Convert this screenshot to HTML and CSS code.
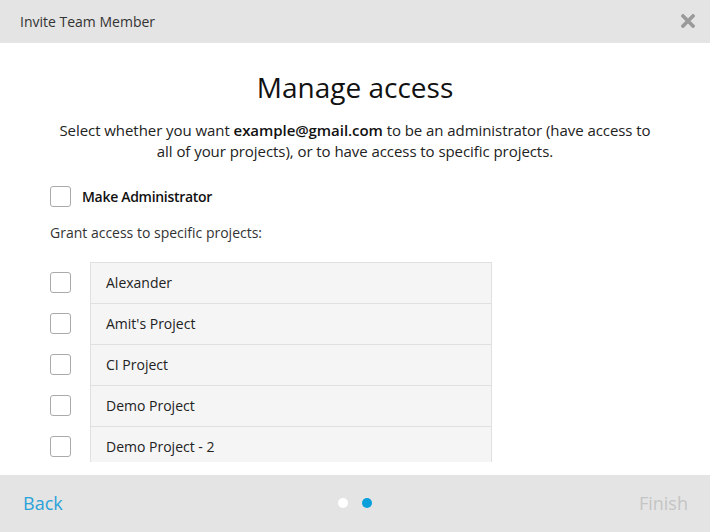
FILE: index.html
```html
<!DOCTYPE html>
<html>
<head>
<meta charset="utf-8">
<link rel="stylesheet" href="styles.css">
</head>
<body>
<div class="modal">
  <div class="header">
    <span class="header-title">Invite Team Member</span>
    <svg class="close" width="14" height="14" viewBox="0 0 14 14"><path d="M2 2 L12 12 M12 2 L2 12" stroke="#9a9a9a" stroke-width="3.6" stroke-linecap="square"/></svg>
  </div>
  <div class="content">
    <h1 class="title">Manage access</h1>
    <p class="desc">Select whether you want <b>example@gmail.com</b> to be an administrator (have access to all of your projects), or to have access to specific projects.</p>
    <div class="admin-row">
      <span class="cb"></span>
      <span class="admin-label">Make Administrator</span>
    </div>
    <div class="grant">Grant access to specific projects:</div>
    <div class="list-wrap">
      <div class="row"><span class="cb"></span><div class="item">Alexander</div></div>
      <div class="row"><span class="cb"></span><div class="item">Amit's Project</div></div>
      <div class="row"><span class="cb"></span><div class="item">CI Project</div></div>
      <div class="row"><span class="cb"></span><div class="item">Demo Project</div></div>
      <div class="row"><span class="cb"></span><div class="item">Demo Project - 2</div></div>
    </div>
  </div>
  <div class="footer">
    <span class="back">Back</span>
    <div class="dots"><span class="dot"></span><span class="dot active"></span></div>
    <span class="finish">Finish</span>
  </div>
</div>
</body>
</html>
```
FILE: styles.css
```css
html, body {
  margin: 0;
  padding: 0;
  background: #fff;
}
body {
  font-family: "Open Sans", "Liberation Sans", sans-serif;
  color: #222;
}
.modal {
  width: 710px;
  height: 532px;
  display: flex;
  flex-direction: column;
  overflow: hidden;
}
.header {
  height: 43px;
  flex: none;
  background: #e4e4e4;
  display: flex;
  align-items: center;
  justify-content: space-between;
  padding: 0 15px 0 20px;
  box-sizing: border-box;
}
.header-title {
  font-size: 14px;
  color: #333;
}
.close {
  display: block;
  margin-top: -1px;
}
.content {
  flex: 1;
  min-height: 0;
  display: flex;
  flex-direction: column;
  padding: 0 50px 13px;
  overflow: hidden;
}
.title {
  margin: 25px 0 0;
  font-size: 28px;
  font-weight: normal;
  line-height: 38px;
  text-align: center;
  color: #111;
}
.desc {
  margin: 14px 0 0;
  font-size: 15px;
  line-height: 21px;
  letter-spacing: -0.06px;
  text-align: center;
  color: #222;
}
.desc b {
  font-weight: 600;
  color: #111;
}
.admin-row {
  display: flex;
  align-items: center;
  margin-top: 24px;
  gap: 11px;
}
.cb {
  width: 21px;
  height: 21px;
  box-sizing: border-box;
  border: 1px solid #aaa;
  border-radius: 3px;
  background: #fff;
  flex: none;
}
.admin-label {
  font-size: 14px;
  font-weight: 600;
  letter-spacing: -0.3px;
  color: #111;
}
.grant {
  margin-top: 16px;
  font-size: 14px;
  line-height: 20px;
  color: #333;
}
.list-wrap {
  margin-top: 19px;
  flex: 1;
  min-height: 0;
  overflow: hidden;
}
.row {
  display: flex;
  align-items: center;
  gap: 19px;
}
.item {
  width: 402px;
  height: 41px;
  box-sizing: border-box;
  background: #f5f5f5;
  border: 1px solid #e0e0e0;
  border-bottom: none;
  padding: 0 0 2px 15px;
  display: flex;
  align-items: center;
  font-size: 14px;
  color: #222;
}
.footer {
  height: 57px;
  flex: none;
  background: #e4e4e4;
  display: flex;
  align-items: center;
  justify-content: space-between;
  padding: 0 22px 2px 23px;
  box-sizing: border-box;
  position: relative;
}
.back {
  font-size: 18px;
  color: #2aa2d8;
}
.finish {
  font-size: 18px;
  color: #c4c4c4;
}
.dots {
  position: absolute;
  left: 338px;
  top: 23px;
  display: flex;
  gap: 14px;
}
.dot {
  width: 10px;
  height: 10px;
  border-radius: 50%;
  background: #fff;
}
.dot.active {
  background: #0a9fdb;
}
```
